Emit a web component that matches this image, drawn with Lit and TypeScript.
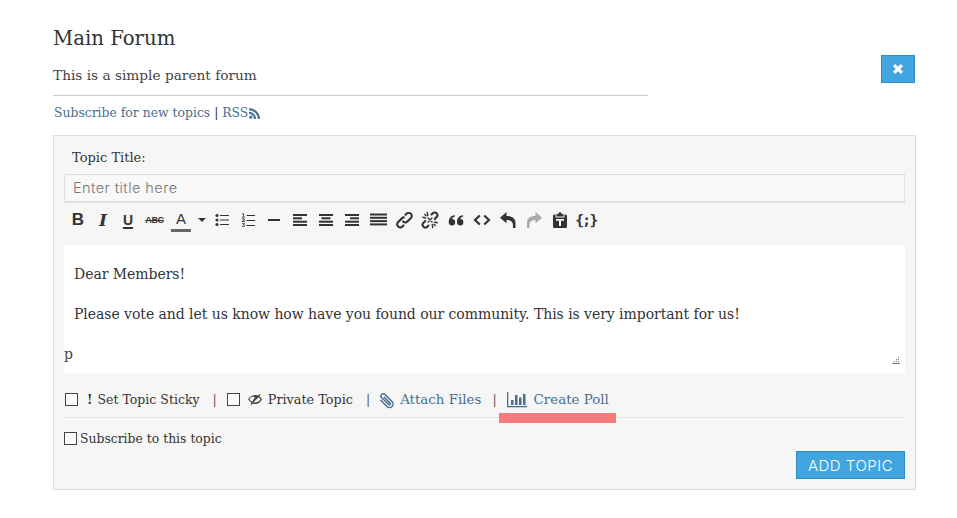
import { LitElement, html, css, svg } from "lit";
import { customElement } from "lit/decorators.js";

const ic = (w: number, h: number, body: unknown) =>
  html`<svg width=${w} height=${h} viewBox="0 0 ${w} ${h}" fill="currentColor">${body}</svg>`;

const lines = (rows: [number, number, number][]) =>
  rows.map(([x1, x2, y]) => svg`<rect x=${x1} y=${y} width=${x2 - x1} height="2"></rect>`);

const tools: [string, unknown][] = [
  ["", html`<span class="t b">B</span>`],
  ["n24", html`<span class="t i">I</span>`],
  ["", html`<span class="t u">U</span>`],
  ["n27", html`<span class="t s">ABC</span>`],
  ["", html`<span class="t a">A</span><span class="abar"></span>`],
  ["n15", ic(8, 4, svg`<path d="M0 0h8L4 4z"></path>`)],
  ["", ic(14, 14, svg`<circle cx="2" cy="2.5" r="1.6"></circle><circle cx="2" cy="7" r="1.6"></circle><circle cx="2" cy="11.5" r="1.6"></circle><rect x="5" y="2" width="9" height="1"></rect><rect x="5" y="6.5" width="9" height="1"></rect><rect x="5" y="11" width="9" height="1"></rect>`)],
  ["", ic(14, 14, svg`<path d="M1 .8l1-.6h.8v3.6H4v.7H.8v-.7h1.2V1.200L1 1.600zM.8 9V8.400c.8-1 1.900-1.500 1.900-2 0-.6-1.100-.5-1.800 0V5.700c1-.6 2.800-.6 2.800.7 0 .9-1 1.400-1.700 1.900H4V9zM1 10.200h2.900v.6l-1 .9c.7.100 1.100.5 1.100 1 0 1.100-2.300 1.400-3.200.8v-.7c.8.500 2.300.5 2.300-.1 0-.4-.7-.5-1.300-.4v-.5l1-.9H1z"></path><rect x="5.500" y="2" width="8.500" height="1"></rect><rect x="5.500" y="7" width="8.500" height="1"></rect><rect x="5.500" y="12" width="8.500" height="1"></rect>`)],
  ["", ic(14, 4, svg`<rect x="1" y="1" width="12" height="2"></rect>`)],
  ["", ic(14, 14, lines([[0, 14, 1], [0, 9, 4.300], [0, 14, 7.700], [0, 14, 11]]))],
  ["", ic(14, 14, lines([[0, 14, 1], [2.500, 11.500, 4.300], [0, 14, 7.700], [0, 14, 11]]))],
  ["", ic(14, 14, lines([[0, 14, 1], [5, 14, 4.300], [0, 14, 7.700], [0, 14, 11]]))],
  ["", ic(17, 14, lines([[0, 17, 0.500], [0, 17, 3.800], [0, 17, 7.100], [0, 17, 10.400]]))],
  ["", ic(18, 17, svg`<g fill="none" stroke="currentColor" stroke-width="2.100" stroke-linecap="round"><path d="M10.500 2.800l1-1a3 3 0 0 1 4.400 4.300l-3.500 3.500a3 3 0 0 1-4.300 0"></path><path d="M8.800 5.300a3 3 0 0 0-1.400.6L3.200 10.100a3 3 0 0 0 4.300 4.300l1-1"></path></g>`)],
  ["", ic(18, 18, svg`<g fill="none" stroke="currentColor" stroke-width="2.100" stroke-linecap="round"><path d="M10.500 3.500l1.200-1.200a2.700 2.700 0 0 1 3.900 3.800l-1.800 1.800"></path><path d="M7.500 14.500l-1.200 1.200a2.700 2.700 0 0 1-3.900-3.800l1.800-1.800"></path></g><g fill="none" stroke="currentColor" stroke-width="1.400" stroke-linecap="round"><path d="M4.500 7L1.800 6.300M6.800 4.500L6.200 1.500M3.800 3.500l1.300 1.300M13.500 11l2.700.7M11.200 13.500l.6 3M14.200 14.500l-1.300-1.300M7 7l4 4M11 7l-4 4"></path></g>`)],
  ["", ic(16, 12, svg`<path d="M6.800 1.200v1.500C5 3 4.300 3.800 4.100 5A3.200 3.200 0 1 1 .8 7.800C.8 4 3 1.500 6.800 1.200zM15 1.200v1.500C13.200 3 12.500 3.800 12.300 5A3.200 3.200 0 1 1 9 7.800C9 4 11.200 1.500 15 1.200z"></path>`)],
  ["", ic(18, 12, svg`<path d="M6.800 1.500L2 6l4.800 4.500M11.200 1.500L16 6l-4.800 4.500" fill="none" stroke="currentColor" stroke-width="2.200"></path>`)],
  ["", ic(18, 18, svg`<path d="M7.500 1L1 6.800l6.500 5.400V9c3.500 0 6 1 6.400 4.500V17H16.500v-4.800C16.500 7.300 12.500 4.800 7.500 5z"></path>`)],
  ["muted", ic(18, 18, svg`<path d="M10.500 1l6.500 5.800-6.500 5.400V9C7 9 5 10 4.500 13v4H2v-4.800C2 7.300 5.500 4.800 10.500 5z"></path>`)],
  ["", ic(16, 16, svg`<path fill-rule="evenodd" d="M4.500 2h2C6.600.8 7.200 0 8 0s1.400.8 1.500 2h2v2.500h-7zM2.500 2.500h1V5.500h9v-3h1A1.500 1.500 0 0 1 15 4v10.500A1.500 1.500 0 0 1 13.500 16h-11A1.500 1.500 0 0 1 1 14.500V4a1.500 1.500 0 0 1 1.500-1.500zM4 7v1.800h3V14h2V8.800h3V7z"></path>`)],
  ["wide", html`<span class="t brace">{;}</span>`],
];

@customElement("app-root")
export class AppRoot extends LitElement {
  static styles = css`
    :host { display: block; width: 957px; height: 518px; overflow: hidden; background: #fff; color: #333;
      font-family: "DejaVu Serif", "Liberation Serif", serif; font-size: 12.5px; }
    .page { padding: 24px 41px 0 53px; }
    .head { display: flex; align-items: flex-start; justify-content: space-between; }
    .intro { width: 595px; }
    h1 { margin: 0; font-size: 19.700px; font-weight: 400; line-height: 29px; color: #333; }
    .desc { margin-top: 12px; line-height: 20px; font-size: 13.700px; color: #444; padding-bottom: 10px; border-bottom: 1px solid #ccc; }
    .close { width: 34px; height: 28px; box-sizing: border-box; background: #42a5e0; border: 1px solid #2b8fc2; color: #fff;
      margin: 31px 1px 0 0; display: flex; align-items: center; justify-content: center; }
    .subs { margin: 7px 0 0 1px; line-height: 20px; font-size: 12.400px; color: #333; display: flex; align-items: center; white-space: pre; height: 20px; }
    a, .lnk { color: #47708f; text-decoration: none; }
    .rss { margin-left: 1px; color: #47708f; display: block; height: 11px; }
    .rss svg { display: block; }
    .panel { margin-top: 12px; height: 355px; box-sizing: border-box; background: #f6f6f6; border: 1px solid #ddd; padding: 12px 10px 10px; position: relative; }
    .label { margin-left: 8px; line-height: 20px; font-size: 13px; color: #333; }
    .title { margin-top: 6px; height: 29px; box-sizing: border-box; border: solid #e0e0e0; background: #f8f8f8; font-family: Inter, Lato, sans-serif;
      color: #777; font-size: 14.500px; line-height: 25px; padding-left: 8px; letter-spacing: .45px; font-weight: 300; border-width: 1px 1px 2px; }
    .bar { display: flex; align-items: center; height: 34px; padding-left: 1px; color: #333; }
    .tb { width: 26px; height: 34px; flex: none; display: flex; align-items: center; justify-content: center; position: relative; }
    .n24 { width: 24px; } .n27 { width: 27px; } .n15 { width: 15px; }
    .muted { color: #aaa; }
    .wide { width: 26px; }
    .t { font-family: "Liberation Sans", sans-serif; color: #333; }
    .b { font-weight: 700; font-size: 17px; }
    .i { font-weight: 700; font-style: italic; font-size: 17px; font-family: "DejaVu Serif", serif; }
    .u { font-weight: 700; font-size: 14px; text-decoration: underline; text-underline-offset: 2px; text-decoration-thickness: 2px; }
    .s { font-size: 9px; font-weight: 700; letter-spacing: -.3px; text-decoration: line-through; }
    .a { font-size: 15px; margin-top: -4px; }
    .abar { position: absolute; left: 3px; width: 20px; height: 3px; top: 26px; background: #666; }
    .brace { font-family: "DejaVu Sans Mono", monospace; font-weight: 700; font-size: 14.500px; letter-spacing: -1.500px; }
    .editor { margin-top: 9px; height: 127px; background: #fff; position: relative; font-size: 14px; letter-spacing: -.05px; color: #333; box-sizing: border-box; padding-top: 18px; }
    .editor p { margin: 0 0 20px 10px; line-height: 20px; }
    .path { position: absolute; left: 0; bottom: 9px; line-height: 20px; color: #444; }
    .grip { position: absolute; right: 5px; bottom: 8px; color: #777; display: block; height: 8px; }
    .grip svg { display: block; }
    .opts { display: flex; align-items: center; height: 27px; margin-top: 13px; padding-left: 1px; font-size: 12.500px; white-space: nowrap; }
    .box { width: 13px; height: 13px; box-sizing: border-box; border: 1px solid #444; background: #fdfdfd; flex: none; }
    .sep { color: #555; }
    .opts svg { display: block; flex: none; }
    .rule { border-top: 1px solid #e4e4e4; margin-top: 4px; }
    .sub { display: flex; align-items: center; height: 20px; margin-top: 10px; gap: 3px; font-size: 12.400px; color: #333; }
    .foot { display: flex; justify-content: flex-end; margin-top: 3px; }
    .add { width: 109px; height: 28px; box-sizing: border-box; background: #42a5e0; border: 1px solid #2b8fc2; color: #fff;
      font-family: Inter, Lato, sans-serif; font-size: 15px; font-weight: 300; letter-spacing: .5px; display: flex; align-items: center; justify-content: center; }
    .mark { position: absolute; left: 445px; top: 277px; width: 117px; height: 10px; background: #f87b7b; }
    .m1 { margin-left: 9px; font-weight: 700; }
    .g { margin-left: 5px; }
    .s1 { margin-left: 13px; } .b2 { margin-left: 10px; } .eye { margin-left: 8px; display: block; color: #444; }
    .priv { margin-left: 5px; font-size: 12.800px; } .s2 { margin-left: 13px; }
    .clip { margin-left: 9px; display: block; } .att { margin-left: 5px; font-size: 13.400px; }
    .s3 { margin-left: 11px; } .poll { margin-left: 10px; display: block; } .cp { margin-left: 7px; font-size: 13.400px; }
  `;

  render() {
    return html`<div class="page">
      <div class="head">
        <div class="intro">
          <h1>Main Forum</h1>
          <div class="desc">This is a simple parent forum</div>
        </div>
        <div class="close">${ic(10, 10, svg`<path d="M0 2.200L2.200 0 5 2.800 7.800 0 10 2.200 7.200 5 10 7.800 7.800 10 5 7.200 2.200 10 0 7.800 2.800 5z"></path>`)}</div>
      </div>
      <div class="subs"><a>Subscribe for new topics</a> | <a>RSS</a><span class="rss">${ic(11, 11, svg`<circle cx="1.800" cy="9.200" r="1.600"></circle><path d="M0 3.800a7.200 7.200 0 0 1 7.200 7.200H5A5 5 0 0 0 0 6zM0 0a11 11 0 0 1 11 11H8.800A8.800 8.800 0 0 0 0 2.200z"></path>`)}</span></div>
      <div class="panel">
        <div class="label">Topic Title:</div>
        <div class="title">Enter title here</div>
        <div class="bar">${tools.map(([c, b]) => html`<div class="tb ${c}">${b}</div>`)}</div>
        <div class="editor">
          <p>Dear Members!</p>
          <p>Please vote and let us know how have you found our community. This is very important for us!</p>
          <div class="path">p</div>
          <span class="grip">${ic(8, 8, svg`<path d="M6 0h1v1H6zM4 2h1v1H4zM6 2h1v1H6zM2 4h1v1H2zM4 4h1v1H4zM6 4h1v1H6zM0 6h8v1H0z"></path>`)}</span>
        </div>
        <div class="opts">
          <span class="box"></span>
          <span class="m1">!</span>
          <span class="g">Set Topic Sticky</span>
          <span class="sep s1">|</span>
          <span class="box b2"></span>
          <span class="eye">${ic(15, 11, svg`<path fill-rule="evenodd" d="M0 5.500C2 2.500 4.500 1 7.500 1c1 0 2 .2 2.900.6L11.500 0l1 .7-1 1.500c1 .7 1.800 1.900 2.500 3.300-1.800 3-4 4.500-6.500 4.500-1 0-2-.2-2.900-.6L3.500 11l-1-.7 1-1.500C2.400 8 1 6.900 0 5.500zM1.500 5.500c.8 1 1.700 1.800 2.700 2.300L7 3.100A4 4 0 0 0 1.500 5.500zM5.500 8.300c2.500.7 5.300-.6 7-2.800-.5-.9-1.100-1.600-1.900-2.200z"></path>`)}</span>
          <span class="priv">Private Topic</span>
          <span class="sep s2">|</span>
          <span class="lnk clip">${ic(16, 18, svg`<path d="M14.500 9L8 15.500a3.500 3.500 0 0 1-5-5L10 3.500a2.300 2.300 0 0 1 3.300 3.300L6.500 13.300a1 1 0 0 1-1.500-1.400L11 6" fill="none" stroke="currentColor" stroke-width="1.500" transform="matrix(-1 0 0 1 16 0)"></path>`)}</span>
          <span class="lnk att">Attach Files</span>
          <span class="sep s3">|</span>
          <span class="lnk poll">${ic(20, 18, svg`<rect x="0" y="1" width="1.300" height="15"></rect><rect x="0" y="15" width="20" height="1.300"></rect><rect x="4" y="9" width="2.500" height="5"></rect><rect x="8" y="4" width="2.500" height="10"></rect><rect x="12" y="6.500" width="2.500" height="7.500"></rect><rect x="16" y="3" width="2.500" height="11"></rect>`)}</span>
          <span class="lnk cp">Create Poll</span>
        </div>
        <div class="rule"></div>
        <div class="sub"><span class="box"></span><span>Subscribe to this topic</span></div>
        <div class="foot"><div class="add">ADD TOPIC</div></div>
        <div class="mark"></div>
      </div>
    </div>`;
  }
}
